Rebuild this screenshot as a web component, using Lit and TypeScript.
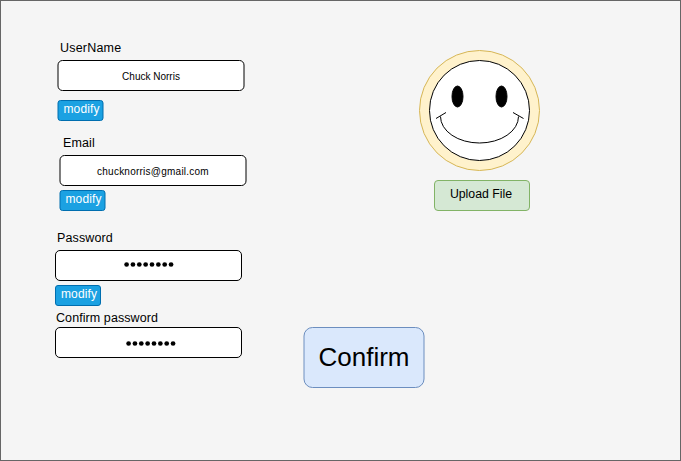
import { LitElement, html, svg, css, nothing } from "lit";
import { customElement, property } from "lit/decorators.js";

@customElement("profile-field")
class ProfileField extends LitElement {
  @property() label = "";
  @property() value = "";
  @property({ type: Boolean }) secret = false;
  @property({ type: Boolean }) editable = false;

  static styles = css`
    :host { display: block; }
    .label {
      height: 14px;
      line-height: 14px;
      padding-left: var(--label-indent, 2px);
      white-space: nowrap;
      font-size: 12.5px;
      letter-spacing: var(--label-spacing, 0.12px);
    }
    .box {
      box-sizing: border-box;
      width: 187px;
      height: 31px;
      margin-top: var(--box-gap, 5px);
      border: 1px solid #000;
      border-radius: 5px;
      background: #fff;
      text-align: center;
      font-size: 10px;
      line-height: 31px;
      white-space: nowrap;
      letter-spacing: var(--value-spacing, 0);
      transform: var(--half-step, none);
    }
    .dots {
      display: block;
      width: 50px;
      height: 5px;
      margin: var(--dots-offset, 11px 0 0 68px);
    }
    .modify {
      box-sizing: border-box;
      display: block;
      width: 46px;
      height: 21px;
      margin: var(--modify-gap, 4px) 0 0;
      padding: 0 0 0 5px;
      border: 1px solid #006eaf;
      border-radius: 3px;
      background: #1ba1e2;
      color: #fff;
      font: 12px/17px "Liberation Sans", Arial, sans-serif;
      letter-spacing: 0.12px;
      transform: var(--half-step, none);
    }
  `;

  private renderDots() {
    return html`
      <svg class="dots" viewBox="0 0 50 5">
        ${Array.from({ length: 8 }, (_, i) => svg`<circle cx=${2.6 + i * 6.35} cy="2.5" r="2.35" />`)}
      </svg>
    `;
  }

  render() {
    return html`
      <div class="label">${this.label}</div>
      <div class="box">${this.secret ? this.renderDots() : this.value}</div>
      ${this.editable ? html`<div class="modify" role="button">modify</div>` : nothing}
    `;
  }
}

@customElement("app-root")
class AppRoot extends LitElement {
  static styles = css`
    :host {
      display: flex;
      box-sizing: border-box;
      width: 681px;
      height: 461px;
      border: 1px solid #666;
      background: #f5f5f5;
      color: #000;
      font: 12px "Liberation Sans", Arial, sans-serif;
    }
    .form { width: 248px; padding: 40px 0 0 54px; box-sizing: border-box; }
    .user { margin-left: 2px; --modify-gap: 9px; --label-indent: 3px; --label-spacing: 0.2px; --half-step: translateX(0.5px); }
    .mail { margin: 15px 0 0 4px; --value-spacing: 0.24px; --label-indent: 4px; --half-step: translateX(0.5px); }
    .pass { margin-top: 20px; }
    .again { margin-top: 5px; --box-gap: 2px; --label-indent: 1px; --label-spacing: 0.08px; --dots-offset: 13px 0 0 70px; }
    .action { width: 121px; margin: 326px 0 0 55px; }
    .confirm {
      box-sizing: border-box;
      height: 61px;
      border: 1px solid #6c8ebf;
      border-radius: 9px;
      background: #dae8fc;
      font-size: 26px;
      line-height: 59px;
      text-align: center;
      transform: translateX(-0.5px);
    }
    .picture { display: flex; flex-direction: column; width: 122px; margin: 49px 0 0 -7px; }
    .face { display: block; width: 122px; height: 122px; }
    .upload {
      box-sizing: border-box;
      width: 96px;
      height: 31px;
      margin: 8px 0 0 16px;
      padding-right: 2px;
      border: 1px solid #82b366;
      border-radius: 4px;
      background: #d5e8d4;
      font-size: 12.3px;
      line-height: 27px;
      text-align: center;
    }
  `;

  render() {
    return html`
      <div class="form">
        <profile-field class="user" label="UserName" value="Chuck Norris" editable></profile-field>
        <profile-field class="mail" label="Email" value="chucknorris@gmail.com" editable></profile-field>
        <profile-field class="pass" label="Password" secret editable></profile-field>
        <profile-field class="again" label="Confirm password" secret></profile-field>
      </div>
      <div class="action"><div class="confirm" role="button">Confirm</div></div>
      <div class="picture">
        <svg class="face" viewBox="0 0 122 122" fill="none" stroke="#000">
          <circle cx="61.5" cy="60.5" r="60" fill="#fff2cc" stroke="#d6b656" />
          <circle cx="61.5" cy="60.5" r="50" fill="#fff" />
          <ellipse cx="39.5" cy="46.5" rx="5.5" ry="10.5" fill="#000" />
          <ellipse cx="83.5" cy="46.5" rx="5.5" ry="10.5" fill="#000" />
          <path d="M22.5 66.5A39 26.5 0 0 0 100.5 66.5M18 68.5L28 62.5M95 62.5L105.5 68.5" />
        </svg>
        <div class="upload" role="button">Upload File</div>
      </div>
    `;
  }
}
